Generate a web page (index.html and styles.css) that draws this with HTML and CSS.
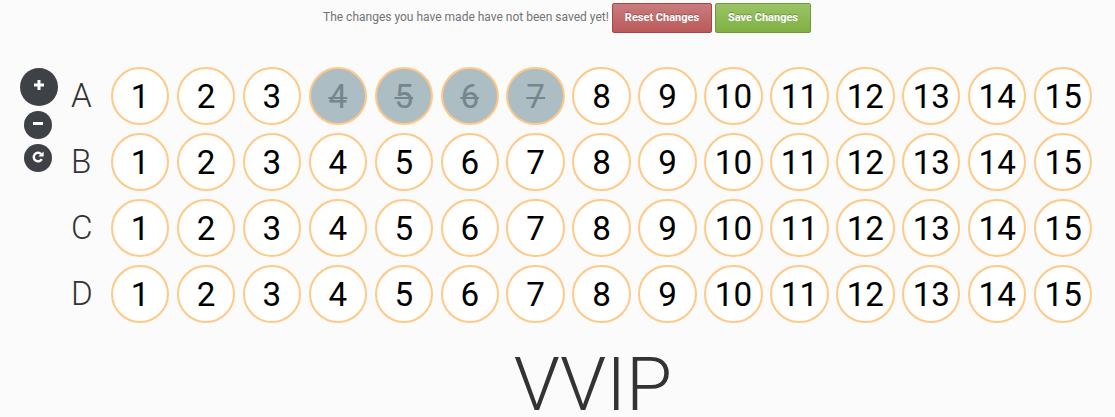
FILE: index.html
```
<!DOCTYPE html>
<html lang="en">
<head>
<meta charset="utf-8">
<title>Seating plan</title>
<link rel="stylesheet" href="styles.css">
</head>
<body>
<header class="notice">
  <span class="notice-text">The changes you have made have not been saved yet!</span>
  <button class="btn btn-reset">Reset Changes</button>
  <button class="btn btn-save">Save Changes</button>
</header>
<main class="plan">
  <nav class="zoom-controls">
    <button class="zoom zoom-in" aria-label="Zoom in"><svg width="10" height="10" viewBox="0 0 10 10"><path d="M3.5 0h3v3.5H10v3H6.5V10h-3V6.5H0v-3h3.5z"/></svg></button>
    <button class="zoom" aria-label="Zoom out"><svg width="10" height="10" viewBox="0 0 10 10"><path d="M0 3h10v3H0z"/></svg></button>
    <button class="zoom" aria-label="Reset zoom"><svg width="12" height="12" viewBox="0 0 12 12"><path d="M9.8 8.2A4.3 4.3 0 1 1 9.2 3.1" fill="none" stroke="#fff" stroke-width="2.4"/><path d="M11.6.5v5H6.4z"/></svg></button>
  </nav>
  <section class="seating">
    <div class="rows" id="rows"></div>
    <h1 class="section-name">VVIP</h1>
  </section>
</main>
<script src="seats.js"></script>
</body>
</html>
```
FILE: styles.css
```
* { box-sizing: border-box; }
body {
  margin: 0;
  height: 417px;
  overflow: hidden;
  background: #fbfbfb;
  font-family: Roboto, sans-serif;
}
.notice {
  display: flex;
  align-items: center;
  gap: 3px;
  height: 66px;
  padding: 3px 0 33px 323px;
}
.notice-text {
  width: 286px;
  font-size: 12px;
  line-height: 18px;
  padding-bottom: 2px;
  color: #737373;
  white-space: nowrap;
}
.btn {
  height: 30px;
  padding: 0;
  border: 1px solid;
  border-radius: 2px;
  font: 700 11px/26px Roboto, sans-serif;
  color: #fff;
  text-shadow: 0 -1px 0 rgba(0, 0, 0, .25);
  white-space: nowrap;
}
.btn-reset {
  width: 100px;
  border-color: #a94446;
  background: linear-gradient(#c97c7d, #bb5a5b);
}
.btn-save {
  width: 96px;
  border-color: #6f9a37;
  background: linear-gradient(#9ac467, #80b043);
}
.plan { display: flex; }
.zoom-controls {
  display: flex;
  flex-direction: column;
  align-items: center;
  width: 38px;
  margin: 2px 13px 0 20px;
}
.zoom {
  display: flex;
  align-items: center;
  justify-content: center;
  width: 28px;
  height: 28px;
  margin-bottom: 5px;
  padding: 0 0 2px;
  border: 0;
  border-radius: 50%;
  background: #3e4146;
}
.zoom svg { fill: #fff; }
.zoom-in {
  width: 38px;
  height: 38px;
  padding-bottom: 4px;
}
.zoom:not(.zoom-in) { margin-left: -2px; }
.seating { width: 1045px; }
.rows {
  display: flex;
  flex-direction: column;
  gap: 7.55px;
  padding-top: .8px;
}
.row {
  display: flex;
  align-items: center;
  gap: 7.55px;
  height: 58.4px;
}
.row-name {
  width: 32.3px;
  font-size: 33.2px;
  font-weight: 300;
  color: #333;
}
.seat {
  display: flex;
  align-items: center;
  justify-content: center;
  width: 58.4px;
  height: 58.4px;
  padding-top: 1.2px;
  border: 2px solid #ffc988;
  border-radius: 50%;
  background: #fff;
  font-size: 33.2px;
  color: #000;
}
.seat-taken {
  background: #acbdc3;
  color: #77868b;
  text-decoration: line-through;
  text-decoration-thickness: 2px;
}
.section-name {
  margin: 25px 0 0;
  text-align: center;
  font-size: 74.8px;
  line-height: 73px;
  font-weight: 300;
  color: #333;
}
```
FILE: seats.js
```
const rows = document.getElementById('rows');
const taken = { A: [4, 5, 6, 7] };

for (const name of ['A', 'B', 'C', 'D']) {
  const row = document.createElement('div');
  row.className = 'row';
  const label = document.createElement('span');
  label.className = 'row-name';
  label.textContent = name;
  row.append(label);
  for (let n = 1; n <= 15; n++) {
    const seat = document.createElement('span');
    seat.className = (taken[name] || []).includes(n) ? 'seat seat-taken' : 'seat';
    seat.textContent = n;
    row.append(seat);
  }
  rows.append(row);
}
```
